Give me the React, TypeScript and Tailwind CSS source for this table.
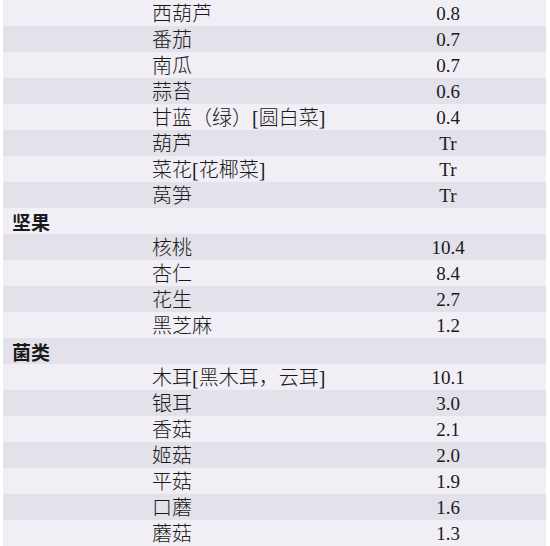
import React from "react";

type Row = { cat?: string; name?: string; val?: string };

const rows: Row[] = [
  { name: "西葫芦", val: "0.8" },
  { name: "番茄", val: "0.7" },
  { name: "南瓜", val: "0.7" },
  { name: "蒜苔", val: "0.6" },
  { name: "甘蓝（绿）[圆白菜]", val: "0.4" },
  { name: "葫芦", val: "Tr" },
  { name: "菜花[花椰菜]", val: "Tr" },
  { name: "莴笋", val: "Tr" },
  { cat: "坚果" },
  { name: "核桃", val: "10.4" },
  { name: "杏仁", val: "8.4" },
  { name: "花生", val: "2.7" },
  { name: "黑芝麻", val: "1.2" },
  { cat: "菌类" },
  { name: "木耳[黑木耳，云耳]", val: "10.1" },
  { name: "银耳", val: "3.0" },
  { name: "香菇", val: "2.1" },
  { name: "姬菇", val: "2.0" },
  { name: "平菇", val: "1.9" },
  { name: "口蘑", val: "1.6" },
  { name: "蘑菇", val: "1.3" },
];

export default function App() {
  return (
    <div className="w-[550px] h-[546px] bg-white pl-[3px] pr-[4px] overflow-hidden">
      <div className="flex flex-col">
        {rows.map((r, i) => (
          <div
            key={i}
            className={`grid grid-cols-[149px_198px_196px] h-[26px] items-center text-[#1a1a1a] ${
              i % 2 === 0 ? "bg-[#f1eff5]" : "bg-[#e3e1e9]"
            }`}
          >
            <div className="pl-[9px] pt-[1px] text-[19px] leading-none font-bold font-['Noto_Sans_CJK_SC',sans-serif]">
              {r.cat ?? ""}
            </div>
            <div className="pt-[1px] text-[20px] leading-none font-light whitespace-nowrap font-['Liberation_Serif','Noto_Sans_CJK_SC',serif]">
              {r.name ?? ""}
            </div>
            <div className="pt-[1px] text-center text-[19px] leading-none font-['Liberation_Serif',serif]">
              {r.val ?? ""}
            </div>
          </div>
        ))}
      </div>
    </div>
  );
}
